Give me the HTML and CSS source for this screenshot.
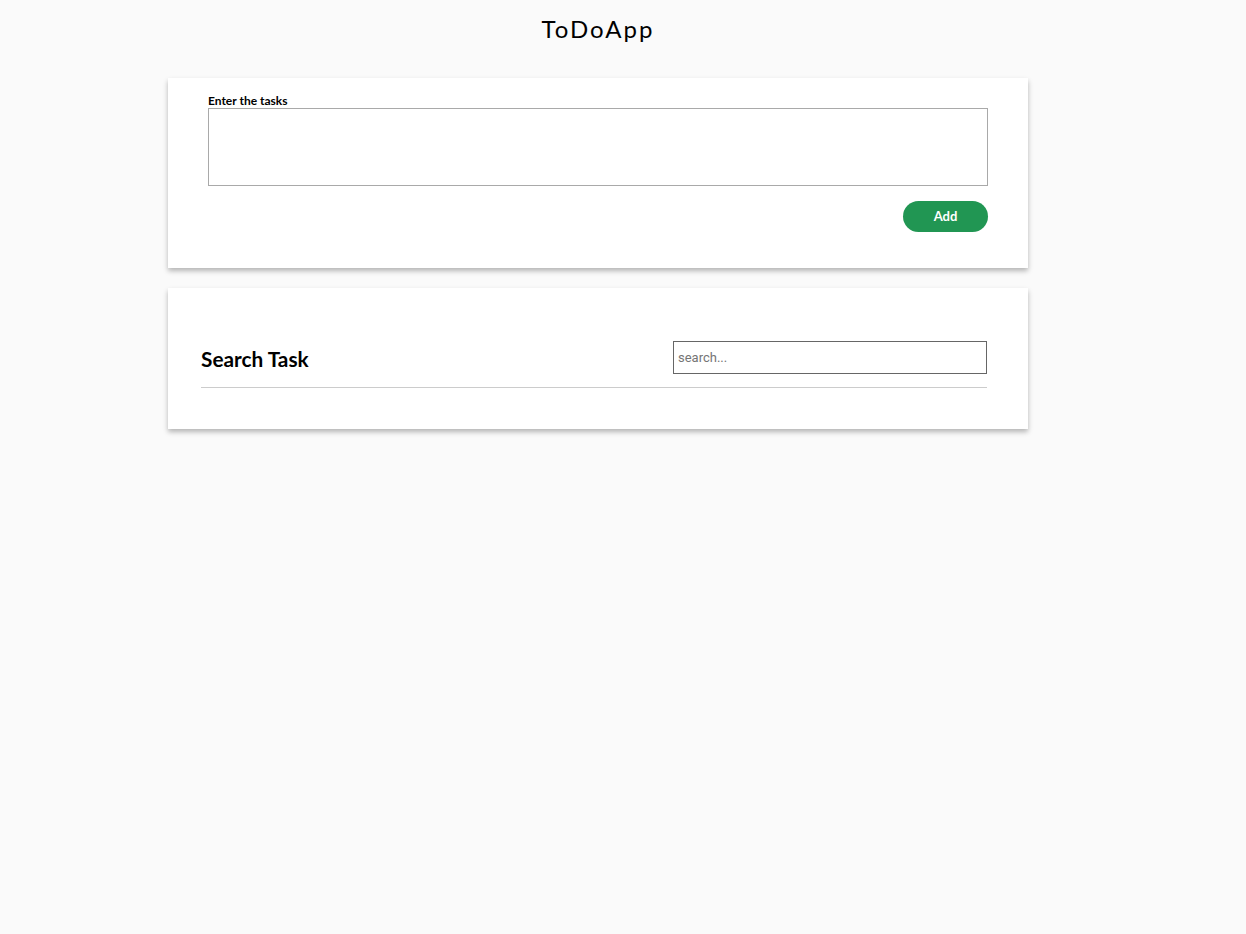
FILE: index.html
```html
<!DOCTYPE html>
<html>
<head>
<meta charset="utf-8">
<link rel="stylesheet" href="styles.css">
</head>
<body>
<div class="app">
  <h1 class="title">ToDoApp</h1>
  <section class="card add-card">
    <label class="label" for="tasks">Enter the tasks</label>
    <textarea id="tasks" class="tasks"></textarea>
    <div class="actions">
      <button class="add-btn">Add</button>
    </div>
  </section>
  <section class="card search-card">
    <div class="search-row">
      <h2 class="search-title">Search Task</h2>
      <input class="search-input" type="text" placeholder="search...">
    </div>
    <div class="divider"></div>
  </section>
</div>
</body>
</html>
```
FILE: styles.css
```css
html, body {
  margin: 0;
  padding: 0;
  background: #fafafa;
  font-family: Lato, "Liberation Sans", sans-serif;
  color: #000;
}
body {
  min-height: 934px;
}
.app {
  width: 1196px;
  padding-bottom: 40px;
  display: flex;
  flex-direction: column;
  align-items: center;
}
.title {
  margin: 14px 0 0;
  height: 64px;
  font-size: 24px;
  font-weight: 400;
  letter-spacing: 2px;
  line-height: 30px;
}
.card {
  width: 860px;
  box-sizing: border-box;
  background: #fff;
  box-shadow: 0 3px 5px rgba(0,0,0,0.28);
}
.add-card {
  height: 190px;
  padding: 15px 40px 0 40px;
  display: flex;
  flex-direction: column;
}
.label {
  font-size: 12px;
  font-weight: 700;
  line-height: 15px;
}
.tasks {
  display: block;
  box-sizing: border-box;
  width: 780px;
  height: 78px;
  margin: 0;
  border: 1px solid #a9a9a9;
  resize: none;
  outline: none;
}
.actions {
  display: flex;
  justify-content: flex-end;
  margin-top: 15px;
}
.add-btn {
  width: 85px;
  height: 31px;
  border: none;
  border-radius: 16px;
  background: #219653;
  color: #fff;
  font-family: Lato, sans-serif;
  font-size: 13px;
  font-weight: 700;
  padding: 0 0 1px;
}
.search-card {
  margin-top: 20px;
  height: 141px;
  padding: 53px 41px 0 33px;
}
.search-row {
  display: flex;
  justify-content: space-between;
  align-items: center;
  height: 33px;
}
.search-title {
  margin: 0;
  font-size: 20.8px;
  font-weight: 700;
  line-height: 24px;
  padding-top: 2px;
}
.search-input {
  box-sizing: border-box;
  width: 314px;
  height: 33px;
  margin: 0;
  border: 1px solid #666;
  padding: 0 4px;
  font-family: Roboto, "Liberation Sans", sans-serif;
  font-size: 13px;
  outline: none;
}
.search-input::placeholder {
  color: #757575;
}
.divider {
  margin-top: 13px;
  height: 1px;
  background: #ccc;
}
```
